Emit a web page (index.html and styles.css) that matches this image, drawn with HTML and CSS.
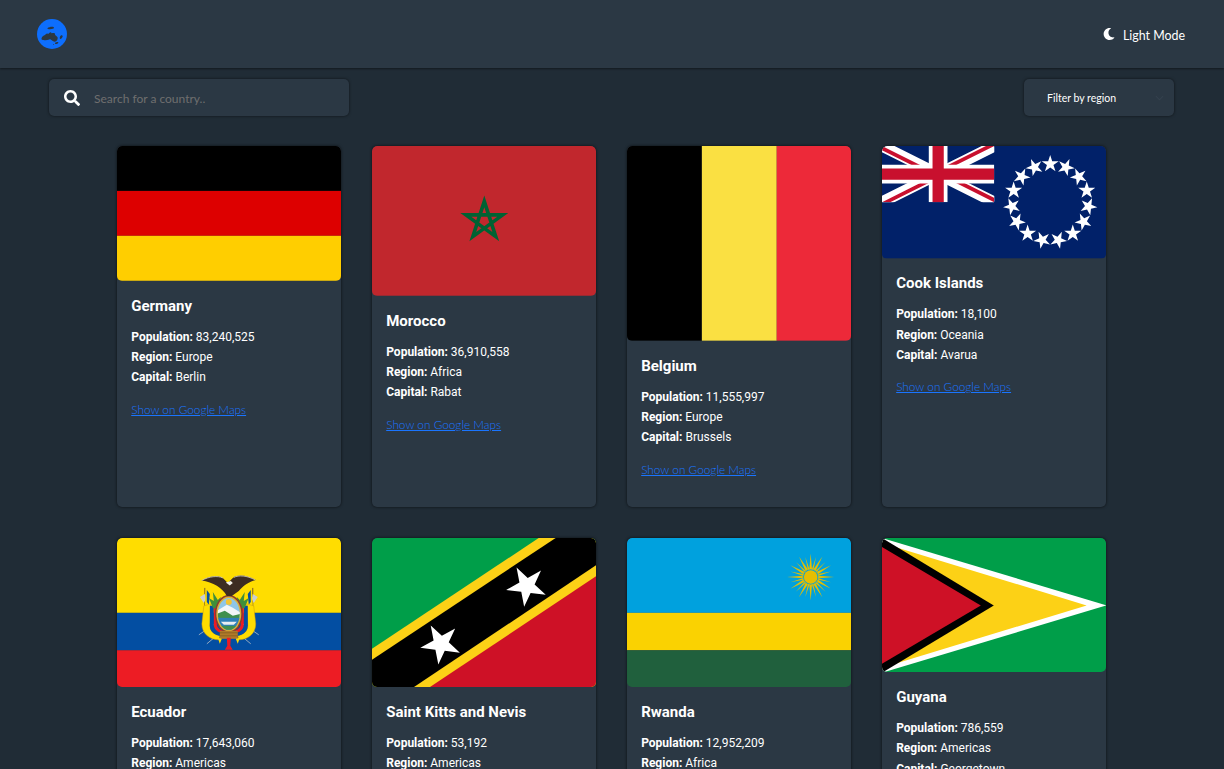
FILE: index.html
```html
<!DOCTYPE html>
<html lang="en">
<head>
<meta charset="utf-8">
<title>Where in the world</title>
<link rel="stylesheet" href="styles.css">
</head>
<body>
<svg class="defs" width="0" height="0" aria-hidden="true">
  <defs>
    <polygon id="star" points="0,-1 .225,-.309 .951,-.309 .363,.118 .588,.809 0,.382 -.588,.809 -.363,.118 -.951,-.309 -.225,-.309"/>
    <polygon id="ray" points="-1.3,-8 0,-23.5 1.3,-8"/>
    <polygon id="ray2" points="-.8,-8 0,-21 .8,-8"/>
    <clipPath id="jack"><path d="M30,15h30v15zv15h-30zh-30v-15zv-15h30z"/></clipPath>
  </defs>
</svg>
<header class="topbar">
  <svg class="logo" viewBox="0 0 30 30" aria-label="Logo">
    <circle cx="15" cy="15" r="15" fill="#0d6efd"/>
    <path fill="#2b3844" d="M4.5 19.500c.3-2.200 2-3 3.500-3.600.8-.4 1.100-1.500 2.200-1.500.6 0 .8.700 1.400.4.500-.8 1.200-1.600 2.300-1.500.6.100.2.900.8 1 1-.3 2-.4 2.800-.2.700.9.200 1.900 1.200 2.500.8.600 1.700 1.100 2 2.200.1 1.500-.7 3-2 3.700-1.500.4-2.700-.2-3.700-.9-.9-.7-1.500-1.500-2.700-1.200-1.900.4-3.600 1.200-5.500.6-1.300-.2-2.300 0-2.300-1z"/>
    <path fill="#2b3844" d="M10.500 9.300c1.400-1.300 4.300-1.900 6-1.200.9.500.5 1.400-.6 1.700-1.600.4-3.300.5-4.900.2-.6-.1-.9-.4-.5-.7zM23.600 16.800c.9-.8 2-.5 2.100.4-.1 1-1 2.300-2 2.700-.8.100-1.100-.8-.9-1.500.1-.6.4-1.200.8-1.600zM18.200 23.700c.9-.7 2.600-.9 3.200-.3.1.7-1.300 1.600-2.200 1.700-.9.100-1.600-.8-1-1.400zM16.400 25c.5-.2.900.1.800.5-.3.400-1 .3-1.100-.1 0-.2.100-.3.300-.4z"/>
  </svg>
  <button class="mode" type="button">
    <svg class="moon" viewBox="0 0 512 512" aria-hidden="true"><path fill="#fff" d="M283.211 512c78.962 0 151.079-35.925 198.857-94.792 7.068-8.708-.639-21.43-11.562-19.35-124.203 23.654-238.262-71.576-238.262-196.954 0-72.222 38.662-138.635 101.498-174.394 9.686-5.512 7.25-20.197-3.756-22.23A258.156 258.156 0 0 0 283.211 0c-141.309 0-256 114.511-256 256 0 141.309 114.511 256 256 256z"/></svg>
    <span class="mode-label">Light Mode</span>
  </button>
</header>

<section class="toolbar">
  <label class="search">
    <svg class="search-icon" viewBox="0 0 512 512" aria-hidden="true"><path fill="#fff" d="M505 442.700L405.300 343c-4.500-4.500-10.600-7-17-7H372c27.600-35.300 44-79.700 44-128C416 93.100 322.900 0 208 0S0 93.100 0 208s93.100 208 208 208c48.300 0 92.700-16.400 128-44v16.300c0 6.400 2.500 12.500 7 17l99.700 99.700c9.400 9.400 24.600 9.400 33.900 0l28.300-28.300c9.400-9.400 9.400-24.600.1-34zM208 336c-70.700 0-128-57.200-128-128 0-70.700 57.200-128 128-128 70.700 0 128 57.200 128 128 0 70.700-57.200 128-128 128z"/></svg>
    <input class="search-input" type="text" placeholder="Search for a country..">
  </label>
  <div class="filter">
    <span>Filter by region</span>
    <svg class="chevron" viewBox="0 0 10 6" aria-hidden="true"><path d="M1 1l4 4 4-4" fill="none" stroke="#34414d" stroke-width="1.2"/></svg>
  </div>
</section>

<main class="grid">
  <article class="card">
    <svg class="flag" viewBox="0 0 225 135" role="img" aria-label="Flag of Germany">
      <rect width="225" height="45" fill="#000"/><rect y="45" width="225" height="45" fill="#d00"/><rect y="90" width="225" height="45" fill="#ffce00"/>
    </svg>
    <div class="info">
      <h2 class="name">Germany</h2>
      <p class="fact"><b>Population:</b> 83,240,525</p>
      <p class="fact"><b>Region:</b> Europe</p>
      <p class="fact"><b>Capital:</b> Berlin</p>
      <a class="maps" href="#">Show on Google Maps</a>
    </div>
  </article>

  <article class="card">
    <svg class="flag" viewBox="0 0 225 150" role="img" aria-label="Flag of Morocco">
      <rect width="225" height="150" fill="#c1272d"/>
      <path d="M112.500 55.500L124 90.800 94 69H131L101 90.800Z" fill="none" stroke="#006233" stroke-width="3.600"/>
    </svg>
    <div class="info">
      <h2 class="name">Morocco</h2>
      <p class="fact"><b>Population:</b> 36,910,558</p>
      <p class="fact"><b>Region:</b> Africa</p>
      <p class="fact"><b>Capital:</b> Rabat</p>
      <a class="maps" href="#">Show on Google Maps</a>
    </div>
  </article>

  <article class="card">
    <svg class="flag" viewBox="0 0 225 195" role="img" aria-label="Flag of Belgium">
      <rect width="75" height="195" fill="#000"/><rect x="75" width="75" height="195" fill="#fae042"/><rect x="150" width="75" height="195" fill="#ed2939"/>
    </svg>
    <div class="info">
      <h2 class="name">Belgium</h2>
      <p class="fact"><b>Population:</b> 11,555,997</p>
      <p class="fact"><b>Region:</b> Europe</p>
      <p class="fact"><b>Capital:</b> Brussels</p>
      <a class="maps" href="#">Show on Google Maps</a>
    </div>
  </article>

  <article class="card">
    <svg class="flag" viewBox="0 0 225 112.500" role="img" aria-label="Flag of Cook Islands">
      <rect width="225" height="112.500" fill="#012169"/>
      <svg width="112.500" height="56.250" viewBox="0 0 60 30">
        <path d="M0 0L60 30M60 0L0 30" stroke="#fff" stroke-width="6"/>
        <path d="M0 0L60 30M60 0L0 30" clip-path="url(#jack)" stroke="#c8102e" stroke-width="4"/>
        <path d="M30 0V30M0 15H60" stroke="#fff" stroke-width="10"/>
        <path d="M30 0V30M0 15H60" stroke="#c8102e" stroke-width="6"/>
      </svg>
      <g fill="#fff" transform="translate(168.500 56.500)">
        <use href="#star" transform="rotate(0) translate(0 -38.500) scale(9)"/>
        <use href="#star" transform="rotate(24) translate(0 -38.500) scale(9)"/>
        <use href="#star" transform="rotate(48) translate(0 -38.500) scale(9)"/>
        <use href="#star" transform="rotate(72) translate(0 -38.500) scale(9)"/>
        <use href="#star" transform="rotate(96) translate(0 -38.500) scale(9)"/>
        <use href="#star" transform="rotate(120) translate(0 -38.500) scale(9)"/>
        <use href="#star" transform="rotate(144) translate(0 -38.500) scale(9)"/>
        <use href="#star" transform="rotate(168) translate(0 -38.500) scale(9)"/>
        <use href="#star" transform="rotate(192) translate(0 -38.500) scale(9)"/>
        <use href="#star" transform="rotate(216) translate(0 -38.500) scale(9)"/>
        <use href="#star" transform="rotate(240) translate(0 -38.500) scale(9)"/>
        <use href="#star" transform="rotate(264) translate(0 -38.500) scale(9)"/>
        <use href="#star" transform="rotate(288) translate(0 -38.500) scale(9)"/>
        <use href="#star" transform="rotate(312) translate(0 -38.500) scale(9)"/>
        <use href="#star" transform="rotate(336) translate(0 -38.500) scale(9)"/>
      </g>
    </svg>
    <div class="info">
      <h2 class="name">Cook Islands</h2>
      <p class="fact"><b>Population:</b> 18,100</p>
      <p class="fact"><b>Region:</b> Oceania</p>
      <p class="fact"><b>Capital:</b> Avarua</p>
      <a class="maps" href="#">Show on Google Maps</a>
    </div>
  </article>

  <article class="card">
    <svg class="flag" viewBox="0 0 225 150" role="img" aria-label="Flag of Ecuador">
      <rect width="225" height="75" fill="#ffdd00"/><rect y="75" width="225" height="37.500" fill="#034ea2"/><rect y="112.500" width="225" height="37.500" fill="#ed1c24"/>
      <path d="M82 97L98 86M90 106L102 96M142 97L126 86M134 106L122 96" stroke="#b9c0c8" stroke-width=".8"/>
      <path d="M88 50V74M136 50V74" stroke="#7a5a2a" stroke-width="1"/>
      <path d="M88 56l-5 3 4 6 2-4zM136 56l5 3-4 6-2-4z" fill="#c9ced2"/>
      <path d="M89 50l3 1 1 10-1 10-4-2z" fill="#ffdd00"/><path d="M90 52l3 4-1 11-2-3z" fill="#034ea2"/>
      <path d="M135 50l-3 1-1 10 1 10 4-2z" fill="#ffdd00"/><path d="M134 52l-3 4 1 11 2-3z" fill="#034ea2"/>
      <path d="M87 68L94 66 93 88C93 94 98 97 103 98L102 102C93 102 85 96 85 86Z" fill="#ffdd00" stroke="#c99a10" stroke-width=".5"/>
      <path d="M137 68L130 66 131 88C131 94 126 97 121 98L122 102C131 102 139 96 139 86Z" fill="#ffdd00" stroke="#c99a10" stroke-width=".5"/>
      <path d="M93 68L97 68 97 88C97 92 100 94 104 95L103 98C97 97 93 93 93 88Z" fill="#034ea2"/>
      <path d="M131 68L127 68 127 88C127 92 124 94 120 95L121 98C127 97 131 93 131 88Z" fill="#034ea2"/>
      <path d="M97 68L100 70 100 86C100 90 103 92 106 93L104 95C100 94 97 91 97 87Z" fill="#ed1c24"/>
      <path d="M127 68L124 70 124 86C124 90 121 92 118 93L120 95C124 94 127 91 127 87Z" fill="#ed1c24"/>
      <path d="M96 70L92 60 97 63 96 54 101 62 104 59 102 72Z" fill="#3f8f3a"/>
      <path d="M128 70L132 60 127 63 128 54 123 62 120 59 122 72Z" fill="#3f8f3a"/>
      <ellipse cx="112" cy="76" rx="14" ry="19" fill="#8c3b2e"/>
      <ellipse cx="112" cy="76" rx="12.500" ry="17.500" fill="#d9b23a"/>
      <clipPath id="oval"><ellipse cx="112" cy="76" rx="11" ry="16"/></clipPath>
      <g clip-path="url(#oval)">
        <rect x="100" y="60" width="24" height="16" fill="#8ec6e8"/>
        <circle cx="112" cy="64" r="3" fill="#f4c430"/>
        <path d="M100 73L110 67 116 70 124 75V82H100Z" fill="#f2f5f7"/>
        <path d="M100 76L108 73 116 78 124 76V82H100Z" fill="#3f8f4e"/>
        <rect x="100" y="80" width="24" height="13" fill="#2e7fb8"/>
        <path d="M104 84H120L117 87H107Z" fill="#e9eef2"/>
        <rect x="100" y="88" width="24" height="5" fill="#3f8f4e"/>
      </g>
      <rect x="103" y="93" width="18" height="8" fill="#b07a2a"/>
      <path d="M103 95H121M103 98H121" stroke="#6b4a1a" stroke-width=".5"/>
      <path d="M101 100l4 1-2 5zM123 100l-4 1 2 5z" fill="#ffdd00"/>
      <path d="M110 100H114L113.500 108 116 112H108L110.500 108Z" fill="#ed1c24"/>
      <path d="M84.700 42.500C92 38 102 37 106 40L111 45 116 40C121 36 130 37 139 42C132 44 126 48 122 53L115 58 110 58C106 50 96 44 84.700 42.500Z" fill="#3d2c22"/>
      <path d="M85 42.500C92 38.500 101 37.500 106 40M138.500 42C130 37.500 122 37 117 39.500" fill="none" stroke="#d8d3c8" stroke-width=".8"/>
      <path d="M109 44.500L114 43 116 45 113 47.500Z" fill="#f3efe6"/>
    </svg>
    <div class="info">
      <h2 class="name">Ecuador</h2>
      <p class="fact"><b>Population:</b> 17,643,060</p>
      <p class="fact"><b>Region:</b> Americas</p>
      <p class="fact"><b>Capital:</b> Quito</p>
      <a class="maps" href="#">Show on Google Maps</a>
    </div>
  </article>

  <article class="card">
    <svg class="flag" viewBox="0 0 225 150" role="img" aria-label="Flag of Saint Kitts and Nevis">
      <rect width="225" height="150" fill="#009e49"/>
      <path d="M225 0V150H0V111L167 0Z" fill="#fcd116"/>
      <path d="M225 0V150H0V122L184 0Z" fill="#000"/>
      <path d="M225 27V150H41Z" fill="#fcd116"/>
      <path d="M225 38V150H57Z" fill="#ce1126"/>
      <use href="#star" fill="#fff" transform="translate(155 48) rotate(-29) scale(21)"/>
      <use href="#star" fill="#fff" transform="translate(69 106) rotate(-29) scale(21)"/>
    </svg>
    <div class="info">
      <h2 class="name">Saint Kitts and Nevis</h2>
      <p class="fact"><b>Population:</b> 53,192</p>
      <p class="fact"><b>Region:</b> Americas</p>
      <p class="fact"><b>Capital:</b> Basseterre</p>
      <a class="maps" href="#">Show on Google Maps</a>
    </div>
  </article>

  <article class="card">
    <svg class="flag" viewBox="0 0 225 150" role="img" aria-label="Flag of Rwanda">
      <rect width="225" height="75" fill="#00a1de"/><rect y="75" width="225" height="37.500" fill="#fad201"/><rect y="112.500" width="225" height="37.500" fill="#20603d"/>
      <g fill="#e5be01" transform="translate(184 39)">
        <use href="#ray"/><use href="#ray" transform="rotate(30)"/><use href="#ray" transform="rotate(60)"/><use href="#ray" transform="rotate(90)"/><use href="#ray" transform="rotate(120)"/><use href="#ray" transform="rotate(150)"/><use href="#ray" transform="rotate(180)"/><use href="#ray" transform="rotate(210)"/><use href="#ray" transform="rotate(240)"/><use href="#ray" transform="rotate(270)"/><use href="#ray" transform="rotate(300)"/><use href="#ray" transform="rotate(330)"/>
        <use href="#ray2" transform="rotate(15)"/><use href="#ray2" transform="rotate(45)"/><use href="#ray2" transform="rotate(75)"/><use href="#ray2" transform="rotate(105)"/><use href="#ray2" transform="rotate(135)"/><use href="#ray2" transform="rotate(165)"/><use href="#ray2" transform="rotate(195)"/><use href="#ray2" transform="rotate(225)"/><use href="#ray2" transform="rotate(255)"/><use href="#ray2" transform="rotate(285)"/><use href="#ray2" transform="rotate(315)"/><use href="#ray2" transform="rotate(345)"/>
        <circle r="8" fill="#00a1de" stroke="#e5be01" stroke-width=".8"/>
        <circle r="6.800"/>
      </g>
    </svg>
    <div class="info">
      <h2 class="name">Rwanda</h2>
      <p class="fact"><b>Population:</b> 12,952,209</p>
      <p class="fact"><b>Region:</b> Africa</p>
      <p class="fact"><b>Capital:</b> Kigali</p>
      <a class="maps" href="#">Show on Google Maps</a>
    </div>
  </article>

  <article class="card">
    <svg class="flag" viewBox="0 0 225 135" role="img" aria-label="Flag of Guyana">
      <rect width="225" height="135" fill="#009e49"/>
      <path d="M0 0L225 67.500 0 135Z" fill="#fff"/>
      <path d="M0 5L205 67.500 0 130Z" fill="#fcd116"/>
      <path d="M0 0L112 67.500 0 135Z" fill="#000"/>
      <path d="M0 9L99 67.500 0 126Z" fill="#ce1126"/>
    </svg>
    <div class="info">
      <h2 class="name">Guyana</h2>
      <p class="fact"><b>Population:</b> 786,559</p>
      <p class="fact"><b>Region:</b> Americas</p>
      <p class="fact"><b>Capital:</b> Georgetown</p>
      <a class="maps" href="#">Show on Google Maps</a>
    </div>
  </article>
</main>
</body>
</html>
```

FILE: styles.css
```css
* { box-sizing: border-box; }

html { scrollbar-width: none; }

body {
  margin: 0;
  background: #202c36;
  color: #fff;
  font-family: Roboto, "Liberation Sans", sans-serif;
}

.defs { position: absolute; }

.topbar {
  height: 68px;
  display: flex;
  align-items: center;
  justify-content: space-between;
  padding: 0 39px 0 37px;
  background: #2b3844;
  box-shadow: 0 1px 2px rgba(0, 0, 0, .45);
}

.logo { width: 30px; height: 30px; display: block; }

.mode {
  display: flex;
  align-items: center;
  gap: 8px;
  padding: 0;
  border: 0;
  background: none;
  color: #fff;
  font: 400 12.4px Lato, sans-serif;
}

.mode-label { padding-top: 2px; }

.moon { width: 12px; height: 12px; display: block; }

.toolbar {
  display: flex;
  justify-content: space-between;
  padding: 11px 50px 0 49px;
}

.search,
.filter {
  height: 37px;
  display: flex;
  align-items: center;
  background: #2b3844;
  border-radius: 5px;
  box-shadow: 0 0 3px rgba(0, 0, 0, .6);
}

.search { width: 300px; padding-left: 15px; gap: 14px; }

.search-icon { width: 16px; height: 16px; display: block; }

.search-input {
  flex: 1;
  min-width: 0;
  border: 0;
  padding: 1px 0 0;
  outline: 0;
  background: none;
  color: #fff;
  font: 400 12px Lato, sans-serif;
}

.search-input::placeholder { color: #6f6f6f; opacity: 1; }

.filter {
  width: 150px;
  padding: 0 10px 0 23px;
  justify-content: space-between;
  font: 400 10.5px Lato, sans-serif;
}

.chevron { width: 9px; height: 6px; display: block; }

.grid {
  display: grid;
  grid-template-columns: repeat(4, 224.6px);
  justify-content: center;
  gap: 30.4px;
  padding: 30.4px 1px 30px 0;
}

.card {
  background: #2b3844;
  border-radius: 5px;
  overflow: hidden;
  box-shadow: 0 0 3px rgba(0, 0, 0, .7);
}

.flag { display: block; width: 100%; height: auto; border-radius: 5px; }

.info { padding: 14.5px 14.5px 27.7px; }

.name {
  margin: 0 0 11px;
  font-size: 15px;
  line-height: 20px;
  font-weight: 700;
}

.fact {
  margin: 0;
  font-size: 12px;
  line-height: 20.4px;
  font-weight: 400;
}

.fact b { font-weight: 700; }

.maps {
  display: block;
  margin-top: 11.8px;
  color: #1a75ff;
  font: 300 11.8px/20px Lato, sans-serif;
}
```
